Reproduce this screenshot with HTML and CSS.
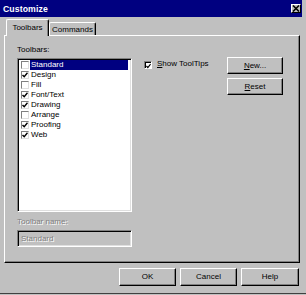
FILE: index.html
```html
<!DOCTYPE html>
<html>
<head>
<meta charset="utf-8">
<link rel="stylesheet" href="styles.css">
</head>
<body>
<div class="window">
  <div class="titlebar">
    <span class="title">Customize</span>
    <span class="close"><svg width="8" height="7" viewBox="0 0 8 7"><path d="M1 0.5 L7 6.5 M7 0.5 L1 6.5" stroke="#000" stroke-width="1.6"/></svg></span>
  </div>
  <div class="tabs">
    <div class="tab active">Toolbars</div>
    <div class="tab">Commands</div>
  </div>
  <div class="panel">
    <div class="col-left">
      <div class="label">Toolbars:</div>
      <div class="listbox">
        <div class="row"><span class="cb"></span><span class="name selected">Standard</span></div>
        <div class="row"><span class="cb"><svg width="6" height="6" viewBox="0 0 6 6"><path d="M0.5 3 L2.2 4.8 L5.5 0.8" stroke="#000" stroke-width="1.4" fill="none"/></svg></span><span class="name">Design</span></div>
        <div class="row"><span class="cb"></span><span class="name">Fill</span></div>
        <div class="row"><span class="cb"><svg width="6" height="6" viewBox="0 0 6 6"><path d="M0.5 3 L2.2 4.8 L5.5 0.8" stroke="#000" stroke-width="1.4" fill="none"/></svg></span><span class="name">Font/Text</span></div>
        <div class="row"><span class="cb"><svg width="6" height="6" viewBox="0 0 6 6"><path d="M0.5 3 L2.2 4.8 L5.5 0.8" stroke="#000" stroke-width="1.4" fill="none"/></svg></span><span class="name">Drawing</span></div>
        <div class="row"><span class="cb"></span><span class="name">Arrange</span></div>
        <div class="row"><span class="cb"><svg width="6" height="6" viewBox="0 0 6 6"><path d="M0.5 3 L2.2 4.8 L5.5 0.8" stroke="#000" stroke-width="1.4" fill="none"/></svg></span><span class="name">Proofing</span></div>
        <div class="row"><span class="cb"><svg width="6" height="6" viewBox="0 0 6 6"><path d="M0.5 3 L2.2 4.8 L5.5 0.8" stroke="#000" stroke-width="1.4" fill="none"/></svg></span><span class="name">Web</span></div>
      </div>
      <div class="label disabled name-label">Toolbar name:</div>
      <div class="textbox disabled">Standard</div>
    </div>
    <div class="col-mid">
      <span class="check"><svg width="6" height="6" viewBox="0 0 6 6"><path d="M0.5 3 L2.2 4.8 L5.5 0.8" stroke="#000" stroke-width="1.4" fill="none"/></svg></span>
      <span class="check-label"><u>S</u>how ToolTips</span>
    </div>
    <div class="col-right">
      <div class="btn"><u>N</u>ew...</div>
      <div class="btn"><u>R</u>eset</div>
    </div>
  </div>
  <div class="footer">
    <div class="btn wide">OK</div>
    <div class="btn wide">Cancel</div>
    <div class="btn wide help">Help</div>
  </div>
</div>
</body>
</html>
```
FILE: styles.css
```css
html, body {
  margin: 0;
  padding: 0;
  background: #c0c0c0;
}
body {
  font-family: "Liberation Sans", Arial, sans-serif;
  font-size: 8px;
  color: #000;
}
.window {
  width: 306px;
  height: 294px;
  box-sizing: border-box;
  padding-right: 4px;
  border-bottom: 1px solid #404040;
  display: flex;
  flex-direction: column;
}
.titlebar {
  height: 17px;
  background: #000080;
  display: flex;
  align-items: center;
  justify-content: space-between;
  padding: 0 1px 0 3px;
}
.title {
  color: #fff;
  font-weight: bold;
  font-size: 8.7px;
  letter-spacing: 0.1px;
}
.close {
  width: 10px;
  height: 9px;
  box-sizing: border-box;
  background: #c0c0c0;
  border-top: 1px solid #fff;
  border-left: 1px solid #fff;
  border-right: 1px solid #000;
  border-bottom: 1px solid #000;
  display: flex;
  align-items: center;
  justify-content: center;
}
.tabs {
  margin-top: 2px;
  padding-left: 6px;
  height: 16px;
  display: flex;
  align-items: flex-end;
}
.tab {
  box-sizing: border-box;
  height: 13px;
  width: 47px;
  border-top: 1px solid #fff;
  border-left: 1px solid #fff;
  border-right: 1px solid #000;
  border-radius: 2px 2px 0 0;
  box-shadow: inset -1px 0 #808080;
  text-align: center;
  line-height: 11px;
  padding-top: 1px;
}
.tab.active {
  width: 43px;
  height: 17px;
  margin-bottom: -1px;
  position: relative;
  z-index: 1;
  background: #c0c0c0;
  line-height: 13px;
  padding-top: 1px;
}
.panel {
  margin-left: 4px;
  width: 296px;
  height: 228px;
  box-sizing: border-box;
  border-top: 1px solid #fff;
  border-left: 1px solid #fff;
  border-right: 1px solid #000;
  border-bottom: 1px solid #000;
  box-shadow: inset -1px -1px #808080;
  display: flex;
  padding: 9px 0 0 12px;
}
.col-left {
  width: 115px;
  display: flex;
  flex-direction: column;
}
.label {
  line-height: 10px;
  height: 10px;
}
.listbox {
  margin-top: 3px;
  height: 154px;
  box-sizing: border-box;
  background: #fff;
  border-top: 1px solid #808080;
  border-left: 1px solid #808080;
  border-bottom: 1px solid #fff;
  border-right: 1px solid #fff;
  box-shadow: inset 1px 1px #000, inset -1px -1px #dfdfdf;
  padding: 1px 2px 0 2px;
}
.row {
  height: 10px;
  display: flex;
  align-items: center;
}
.cb {
  width: 8px;
  height: 8px;
  box-sizing: border-box;
  margin-left: 1px;
  background: #fff;
  border-top: 1px solid #808080;
  border-left: 1px solid #808080;
  border-right: 1px solid #dfdfdf;
  border-bottom: 1px solid #dfdfdf;
  display: flex;
  align-items: center;
  justify-content: center;
}
.name {
  flex: 1;
  margin-left: 1px;
  margin-right: 1px;
  padding-left: 1px;
  line-height: 10px;
  height: 10px;
}
.name.selected {
  background: #000080;
  color: #fff;
}
.disabled {
  color: #808080;
  text-shadow: 1px 1px 0 #fff;
}
.name-label {
  margin-top: 5px;
}
.textbox {
  margin-top: 3px;
  height: 17px;
  box-sizing: border-box;
  border-top: 1px solid #808080;
  border-left: 1px solid #808080;
  border-bottom: 1px solid #fff;
  border-right: 1px solid #fff;
  box-shadow: inset 1px 1px #000, inset -1px -1px #dfdfdf;
  padding-left: 3px;
  line-height: 15px;
}
.col-mid {
  margin-left: 12px;
  padding-top: 16px;
  display: flex;
  align-items: flex-start;
}
.check {
  width: 8px;
  height: 8px;
  box-sizing: border-box;
  background: #fff;
  border-top: 1px solid #808080;
  border-left: 1px solid #808080;
  border-right: 1px solid #fff;
  border-bottom: 1px solid #fff;
  box-shadow: inset 1px 1px #000;
  display: flex;
  align-items: center;
  justify-content: center;
  padding: 1px 0 0 1px;
}
.check-label {
  margin-left: 5px;
  line-height: 8px;
  margin-top: -1px;
}
.col-right {
  margin-left: auto;
  margin-right: 16px;
  padding-top: 12px;
  display: flex;
  flex-direction: column;
  gap: 4px;
}
.btn {
  width: 56px;
  height: 17px;
  box-sizing: border-box;
  border-top: 1px solid #fff;
  border-left: 1px solid #fff;
  border-right: 1px solid #000;
  border-bottom: 1px solid #000;
  box-shadow: inset -1px -1px #808080;
  text-align: center;
  line-height: 15px;
}
.footer {
  margin-top: 5px;
  display: flex;
  justify-content: flex-end;
  gap: 4px;
  padding-right: 3px;
}
.btn.wide {
  width: 57px;
  height: 18px;
  line-height: 16px;
}
.btn.help {
  width: 58px;
}
```
